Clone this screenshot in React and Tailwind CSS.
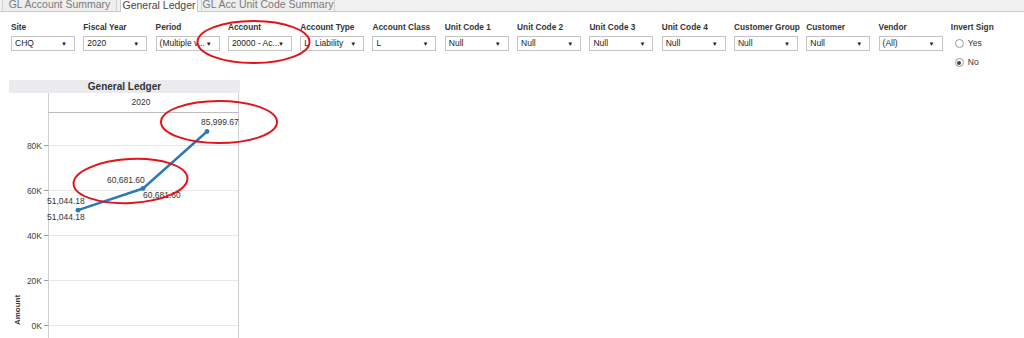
import React from "react";

const filters = [
  { label: "Site", value: "CHQ" },
  { label: "Fiscal Year", value: "2020" },
  { label: "Period", value: "(Multiple v..." },
  { label: "Account", value: "20000 - Ac..." },
  { label: "Account Type", value: "Liability", prefix: true },
  { label: "Account Class", value: "L" },
  { label: "Unit Code 1", value: "Null" },
  { label: "Unit Code 2", value: "Null" },
  { label: "Unit Code 3", value: "Null" },
  { label: "Unit Code 4", value: "Null" },
  { label: "Customer Group", value: "Null" },
  { label: "Customer", value: "Null" },
  { label: "Vendor", value: "(All)" },
];

function Dropdown({ value, prefix }) {
  return (
    <div className="relative flex h-[15px] w-[64px] items-center overflow-hidden border border-[#c4c4c4] bg-white">
      {prefix && <span className="pl-[3px] pr-[3px] text-[8.5px] leading-none text-[#222]">L</span>}
      <span className="w-[50px] overflow-hidden whitespace-nowrap pl-[3px] text-[8.5px] leading-none text-[#222]">{value}</span>
      <span className="absolute right-[7px] top-[2px] text-[6px] leading-[10px] text-[#222]">▼</span>
    </div>
  );
}

function Radio({ checked, label }) {
  return (
    <div className="flex h-[11px] items-center gap-[4px]">
      <span className="flex h-[9px] w-[9px] items-center justify-center rounded-full border border-[#9a9a9a] bg-white">
        {checked && <span className="h-[4px] w-[4px] rounded-full bg-[#444]" />}
      </span>
      <span className="text-[8.5px] leading-none text-[#333]">{label}</span>
    </div>
  );
}

function Chart() {
  const yFor = (v) => 325 - (v / 20000) * 45 - 93;
  const pts = [
    { x: 78, v: 51044.18 },
    { x: 143, v: 60681.6 },
    { x: 207, v: 85999.67 },
  ];
  const ticks = [
    { l: "80K", v: 80000 },
    { l: "60K", v: 60000 },
    { l: "40K", v: 40000 },
    { l: "20K", v: 20000 },
    { l: "0K", v: 0 },
  ];
  const path = pts.map((p, i) => `${i ? "L" : "M"}${p.x} ${yFor(p.v).toFixed(1)}`).join(" ");
  return (
    <svg width="260" height="245" className="block" style={{ fontFamily: "'Liberation Sans', Arial, sans-serif" }}>
      <line x1="48.5" y1="0" x2="48.5" y2="245" stroke="#cfcfcf" />
      <line x1="238.5" y1="0" x2="238.5" y2="245" stroke="#cfcfcf" />
      <line x1="48" y1="19.5" x2="239" y2="19.5" stroke="#bdbdbd" />
      <text x="141" y="12" fontSize="8.5" fill="#333" textAnchor="middle">2020</text>
      {ticks.map((t) => {
        const y = Math.round(yFor(t.v)) + 0.5;
        return (
          <g key={t.l}>
            <line x1="49" y1={y} x2="238" y2={y} stroke="#e8e8e8" />
            <line x1="44" y1={y} x2="48" y2={y} stroke="#9a9a9a" />
            <text x="42" y={y + 3} fontSize="8.5" fill="#444" textAnchor="end">{t.l}</text>
          </g>
        );
      })}
      <text x="0" y="0" fontSize="8" fontWeight="bold" fill="#333" textAnchor="middle" transform="translate(20 217) rotate(-90)">Amount</text>
      <path d={path} fill="none" stroke="#2e78b4" strokeWidth="2.4" strokeLinejoin="round" />
      {pts.map((p) => (
        <circle key={p.x} cx={p.x} cy={yFor(p.v)} r="2.4" fill="#2e78b4" />
      ))}
      <g fontSize="8.5" fill="#333">
        <text x="47" y={111}>51,044.18</text>
        <text x="47" y={127}>51,044.18</text>
        <text x="107" y={90}>60,681.60</text>
        <text x="143" y={105}>60,681.60</text>
        <text x="201" y={32}>85,999.67</text>
      </g>
    </svg>
  );
}

function Tab({ label, active, w }) {
  return (
    <div
      className={
        "mr-[3px] flex shrink-0 items-end justify-center border-x " +
        (active ? "relative -mb-px h-[13px] border-[#c9c9c9] bg-white" : "h-[12px] border-[#d3d3d3] bg-[#eeeeee]")
      }
      style={{ width: w }}
    >
      <span
        className={"whitespace-nowrap pb-[1px] text-[10.5px] leading-[11px] " + (active ? "text-[#444]" : "text-[#7a7a7a]")}
      >
        {label}
      </span>
    </div>
  );
}

export default function App() {
  return (
    <div
      className="relative h-[338px] w-[1024px] overflow-hidden bg-white"
      style={{ fontFamily: "'Liberation Sans', Arial, sans-serif" }}
    >
      {/* Tab bar */}
      <div className="flex h-[12px] items-end border-b border-[#c9c9c9] bg-[#f1f1f1] pl-[2px]">
        <Tab label="GL Account Summary" w={115} />
        <Tab label="General Ledger" w={78} active />
        <Tab label="GL Acc Unit Code Summary" w={134} />
      </div>

      {/* Filters */}
      <div className="flex pl-[11px] pt-[10px]">
        {filters.map((f) => (
          <div key={f.label} className="flex w-[72.3px] shrink-0 flex-col">
            <div className="h-[14px] whitespace-nowrap text-[8.3px] font-bold leading-[10px] text-[#333]">{f.label}</div>
            <Dropdown value={f.value} prefix={f.prefix} />
          </div>
        ))}
        <div className="flex flex-col">
          <div className="h-[14px] whitespace-nowrap text-[8.3px] font-bold leading-[10px] text-[#333]">Invert Sign</div>
          <div className="flex flex-col gap-[8px] pl-[4px] pt-[2px]">
            <Radio label="Yes" />
            <Radio label="No" checked />
          </div>
        </div>
      </div>

      {/* Chart panel */}
      <div className="mt-[12px]">
        <div className="ml-[9px] flex h-[13px] w-[231px] items-center justify-center bg-[#ebebed]">
          <span className="text-[10px] font-bold leading-none text-[#333]">General Ledger</span>
        </div>
        <Chart />
      </div>

      {/* Red annotation ellipses */}
      <svg className="pointer-events-none absolute left-0 top-0" width="1024" height="338">
        <ellipse cx="253.5" cy="42" rx="56" ry="21" fill="none" stroke="#e2141b" strokeWidth="2" />
        <ellipse cx="219" cy="122" rx="58" ry="21" fill="none" stroke="#e2141b" strokeWidth="2" />
        <ellipse cx="130.5" cy="181" rx="57" ry="22" fill="none" stroke="#e2141b" strokeWidth="2" transform="rotate(-3 130.5 181)" />
      </svg>
    </div>
  );
}
